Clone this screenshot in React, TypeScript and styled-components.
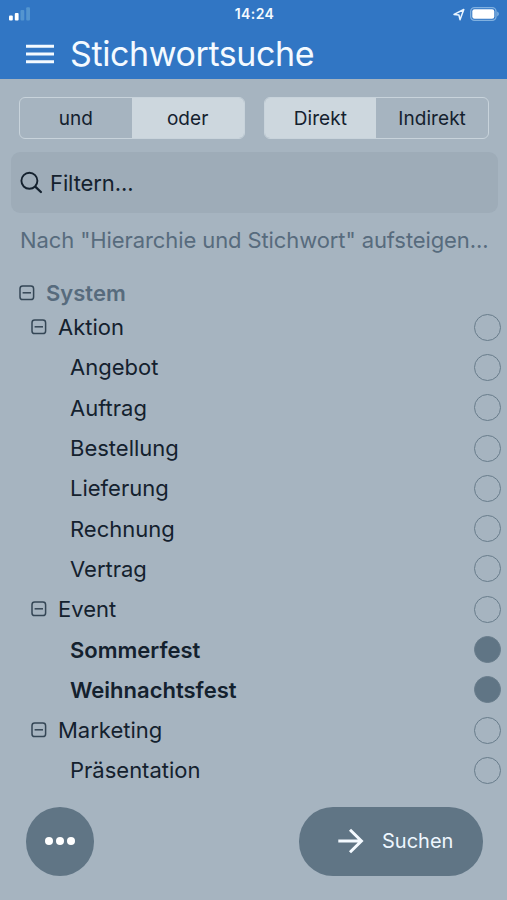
import React, { useState } from 'react';
import styled, { createGlobalStyle } from 'styled-components';

const GlobalStyle = createGlobalStyle`
  * { box-sizing: border-box; }
  body { margin: 0; background: #a6b4c0; }
  button { font: inherit; color: inherit; border: 0; padding: 0; background: none; }
`;

const Screen = styled.div`
  width: 507px;
  height: 900px;
  overflow: hidden;
  display: flex;
  flex-direction: column;
  background: #a6b4c0;
  color: #14212e;
  font-family: Inter, "Liberation Sans", sans-serif;
`;

const Header = styled.header`
  height: 79px;
  flex: none;
  background: #3176c4;
  color: #f4faff;
`;

const StatusBar = styled.div`
  height: 28px;
  padding: 0 7px 0 9px;
  display: grid;
  grid-template-columns: 1fr auto 1fr;
  align-items: center;
`;

const Clock = styled.span`
  font-size: 14px;
  font-weight: 600;
  line-height: 28px;
  letter-spacing: 0.42px;
`;

const StatusIcons = styled.div`
  display: flex;
  justify-content: flex-end;
  align-items: center;
  gap: 5px;
`;

const TitleBar = styled.div`
  height: 51px;
  padding-left: 26px;
  display: flex;
  align-items: center;
  gap: 16px;
`;

const Title = styled.h1`
  margin: 0;
  font-size: 34px;
  font-weight: 400;
  line-height: 50px;
  letter-spacing: -0.4px;
`;

const Switches = styled.div`
  display: flex;
  gap: 19px;
  padding: 18px 18px 0 19px;
`;

const Segments = styled.div`
  flex: 1;
  height: 42px;
  display: flex;
  border: 1.5px solid #c8d3db;
  border-radius: 6px;
  overflow: hidden;
`;

const Segment = styled.button<{ $active: boolean }>`
  flex: 1;
  background: ${(p) => (p.$active ? '#cdd7de' : 'transparent')};
  font-size: 19px;
  letter-spacing: 0.05px;
`;

const Search = styled.label`
  height: 61px;
  flex: none;
  margin: 13px 9px 0 11px;
  padding-left: 9px;
  border-radius: 9px;
  background: #9eacb8;
  display: flex;
  align-items: center;
  gap: 7px;
`;

const SearchInput = styled.input`
  flex: 1;
  min-width: 0;
  border: 0;
  outline: 0;
  padding: 0;
  background: transparent;
  font: 22px Inter, "Liberation Sans", sans-serif;
  letter-spacing: -0.1px;
  color: #14212e;
  &::placeholder { color: #14212e; opacity: 1; }
`;

const SortLine = styled.div`
  height: 55px;
  padding-left: 20px;
  line-height: 55px;
  white-space: nowrap;
  font-size: 22px;
  letter-spacing: -0.1px;
  color: #576b7d;
`;

const Tree = styled.ul`
  list-style: none;
  margin: 0;
  padding: 11px 6px 0 19px;
`;

const Row = styled.li<{ $level: number }>`
  height: ${(p) => (p.$level === 0 ? 28 : 40.3)}px;
  padding-left: ${(p) => p.$level * 12}px;
  display: flex;
  align-items: center;
  gap: 11px;
`;

const Label = styled.span<{ $tone: 'root' | 'plain' | 'chosen'; $indent: boolean; $tracking: number }>`
  flex: 1;
  margin-left: ${(p) => (p.$indent ? '27px' : 0)};
  font-size: 22px;
  line-height: 28px;
  font-weight: ${(p) => (p.$tone === 'plain' ? 400 : 600)};
  letter-spacing: ${(p) => p.$tracking}px;
  color: ${(p) => (p.$tone === 'root' ? '#576b7d' : '#14212e')};
`;

const Radio = styled.button<{ $on: boolean }>`
  width: 27px;
  height: 27px;
  border-radius: 50%;
  border: 1.3px solid #687c8b;
  background: ${(p) => (p.$on ? '#607585' : 'transparent')};
`;

const Footer = styled.footer`
  margin-top: auto;
  padding: 0 24px 24.5px 25.5px;
  display: flex;
  justify-content: space-between;
`;

const RoundButton = styled.button`
  width: 68.5px;
  height: 68.5px;
  border-radius: 50%;
  background: #607585;
  display: flex;
  align-items: center;
  justify-content: center;
  gap: 3px;
`;

const Dot = styled.i`
  width: 8px;
  height: 8px;
  border-radius: 50%;
  background: #fff;
`;

const SearchButton = styled.button`
  width: 184px;
  height: 68.5px;
  border-radius: 34px;
  padding-left: 38px;
  background: #607585;
  color: #eef7ff;
  display: flex;
  align-items: center;
  gap: 18px;
  font-size: 20px;
`;

const Collapse = () => (
  <svg width="16" height="16" viewBox="0 0 16 16" fill="none" stroke="#344655" strokeWidth="1.5">
    <rect x="1" y="1" width="13.6" height="13.6" rx="2.7" />
    <path d="M3.6 7.8h8.4" />
  </svg>
);

const nodes = [
  { name: 'System', level: 0, parent: true, tracking: 0 },
  { name: 'Aktion', level: 1, parent: true, tracking: 0 },
  { name: 'Angebot', level: 2, tracking: 0 },
  { name: 'Auftrag', level: 2, tracking: 0 },
  { name: 'Bestellung', level: 2, tracking: 0 },
  { name: 'Lieferung', level: 2, tracking: 0 },
  { name: 'Rechnung', level: 2, tracking: 0 },
  { name: 'Vertrag', level: 2, tracking: 0 },
  { name: 'Event', level: 1, parent: true, tracking: 0 },
  { name: 'Sommerfest', level: 2, tracking: 0 },
  { name: 'Weihnachtsfest', level: 2, tracking: 0 },
  { name: 'Marketing', level: 1, parent: true, tracking: 0 },
  { name: 'Präsentation', level: 2, tracking: 0 },
];

export default function App() {
  const [operator, setOperator] = useState('oder');
  const [scope, setScope] = useState('Direkt');
  const [chosen, setChosen] = useState(['Sommerfest', 'Weihnachtsfest']);
  const toggle = (name: string) =>
    setChosen((c) => (c.includes(name) ? c.filter((n) => n !== name) : [...c, name]));

  return (
    <Screen>
      <GlobalStyle />
      <Header>
        <StatusBar>
          <svg width="22" height="14" viewBox="0 0 22 14">
            <rect x="0" y="8.5" width="3.8" height="5" rx="1" fill="#fff" />
            <rect x="5.8" y="6" width="3.8" height="7.5" rx="1" fill="#fff" />
            <rect x="11.5" y="3" width="3.8" height="10.5" rx="1" fill="#5495cf" />
            <rect x="17.2" y="0.3" width="3.8" height="13.2" rx="1" fill="#5495cf" />
          </svg>
          <Clock>14:24</Clock>
          <StatusIcons>
            <svg width="12" height="13" viewBox="0 0 12 13" fill="none" stroke="#e9f5ff" strokeWidth="1.5" strokeLinejoin="round">
              <path d="M1 6.4 10.8 1.5 7 11.7 5.9 7Z" />
            </svg>
            <svg width="30" height="14" viewBox="0 0 30 14">
              <rect x="0.7" y="0.7" width="25.3" height="12.6" rx="3.8" fill="none" stroke="#81b1e0" strokeWidth="1.3" />
              <rect x="2.3" y="2.3" width="22" height="9.4" rx="2.2" fill="#fff" />
              <path d="M27.2 4.6c2.2.9 2.2 3.9 0 4.8Z" fill="#81b1e0" />
            </svg>
          </StatusIcons>
        </StatusBar>
        <TitleBar>
          <svg width="28" height="20" viewBox="0 0 28 20" stroke="#f4faff" strokeWidth="3">
            <path d="M0 2.2h28M0 9.9h28M0 17.7h28" />
          </svg>
          <Title>Stichwortsuche</Title>
        </TitleBar>
      </Header>
      <Switches>
        <Segments>
          {['und', 'oder'].map((o) => (
            <Segment key={o} $active={operator === o} onClick={() => setOperator(o)}>{o}</Segment>
          ))}
        </Segments>
        <Segments>
          {['Direkt', 'Indirekt'].map((o) => (
            <Segment key={o} $active={scope === o} onClick={() => setScope(o)}>{o}</Segment>
          ))}
        </Segments>
      </Switches>
      <Search>
        <svg width="23" height="24" viewBox="0 0 23 24" fill="none" stroke="#14212e" strokeWidth="1.9" strokeLinecap="round">
          <circle cx="9.4" cy="9.8" r="8" />
          <path d="m15.5 15.9 5.4 5.1" strokeWidth="2.3" />
        </svg>
        <SearchInput placeholder="Filtern..." />
      </Search>
      <SortLine>Nach "Hierarchie und Stichwort" aufsteigen...</SortLine>
      <Tree>
        {nodes.map((n) => {
          const on = chosen.includes(n.name);
          return (
            <Row key={n.name} $level={n.level}>
              {n.parent && <Collapse />}
              <Label $tone={n.level === 0 ? 'root' : on ? 'chosen' : 'plain'} $indent={!n.parent} $tracking={n.tracking}>
                {n.name}
              </Label>
              {n.level > 0 && <Radio $on={on} aria-label={n.name} onClick={() => toggle(n.name)} />}
            </Row>
          );
        })}
      </Tree>
      <Footer>
        <RoundButton aria-label="Mehr"><Dot /><Dot /><Dot /></RoundButton>
        <SearchButton>
          <svg width="27" height="26" viewBox="0 0 27 26" fill="none" stroke="#f4faff" strokeWidth="3">
            <path d="M1.3 13h23M13 1.8 24.4 13 13 24.2" />
          </svg>
          Suchen
        </SearchButton>
      </Footer>
    </Screen>
  );
}
